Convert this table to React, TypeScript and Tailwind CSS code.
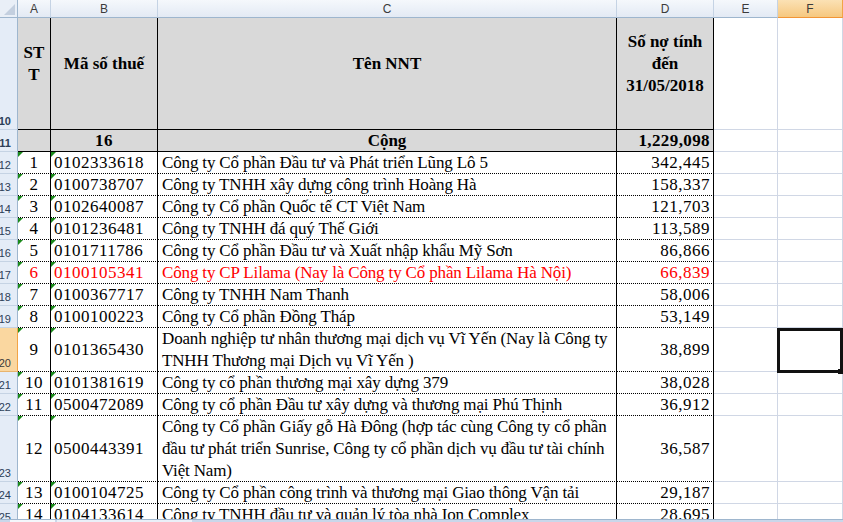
import React from 'react'

type DataRow = {
    num: number
    stt: string
    mst: string
    name: string[]
    amount: string
    red?: boolean
}

const cols = { hdr: 'w-[18px]', a: 'w-[33px]', b: 'w-[107px]', c: 'w-[459px]', d: 'w-[97px]', e: 'w-[64px]', f: 'w-[65px]' }

const rows: DataRow[] = [
    { num: 12, stt: '1', mst: '0102333618', name: ['Công ty Cổ phần Đầu tư và Phát triển Lũng Lô 5'], amount: '342,445' },
    { num: 13, stt: '2', mst: '0100738707', name: ['Công ty TNHH xây dựng công trình Hoàng Hà'], amount: '158,337' },
    { num: 14, stt: '3', mst: '0102640087', name: ['Công ty Cổ phần Quốc tế CT Việt Nam'], amount: '121,703' },
    { num: 15, stt: '4', mst: '0101236481', name: ['Công ty TNHH đá quý Thế Giới'], amount: '113,589' },
    { num: 16, stt: '5', mst: '0101711786', name: ['Công ty Cổ phần Đầu tư và Xuất nhập khẩu Mỹ Sơn'], amount: '86,866' },
    { num: 17, stt: '6', mst: '0100105341', name: ['Công ty CP Lilama (Nay là Công ty Cổ phần Lilama Hà Nội)'], amount: '66,839', red: true },
    { num: 18, stt: '7', mst: '0100367717', name: ['Công ty TNHH Nam Thanh'], amount: '58,006' },
    { num: 19, stt: '8', mst: '0100100223', name: ['Công ty Cổ phần Đồng Tháp'], amount: '53,149' },
    {
        num: 20, stt: '9', mst: '0101365430',
        name: ['Doanh nghiệp tư nhân thương mại dịch vụ Vĩ Yến (Nay là Công ty', 'TNHH Thương mại Dịch vụ Vĩ Yến )'],
        amount: '38,899',
    },
    { num: 21, stt: '10', mst: '0101381619', name: ['Công ty cổ phần thương mại xây dựng 379'], amount: '38,028' },
    { num: 22, stt: '11', mst: '0500472089', name: ['Công ty cổ phần Đầu tư xây dựng và thương mại Phú Thịnh'], amount: '36,912' },
    {
        num: 23, stt: '12', mst: '0500443391',
        name: [
            'Công ty Cổ phần Giấy gỗ Hà Đông (hợp tác cùng Công ty cổ phần',
            'đầu tư phát triển Sunrise, Công ty cổ phần dịch vụ đầu tư tài chính',
            'Việt Nam)',
        ],
        amount: '36,587',
    },
    { num: 24, stt: '13', mst: '0100104725', name: ['Công ty Cổ phần công trình và thương mại Giao thông Vận tải'], amount: '29,187' },
    { num: 25, stt: '14', mst: '0104133614', name: ['Công ty TNHH đầu tư và quản lý tòa nhà Ion Complex'], amount: '28,695' },
]

// tam giác xanh "số lưu dạng text"
function Flag() {
    return <span className="absolute top-0 left-0 w-0 h-0 border-t-[5px] border-t-[#1b8a1b] border-r-[5px] border-r-transparent" />
}

function RowHeader({ label, selected }: { label: number; selected?: boolean }) {
    return (
        <div
            className={`${cols.hdr} shrink-0 flex items-end justify-end pr-[6px] pb-[1px] overflow-hidden border-r border-b font-['Liberation_Sans',sans-serif] text-[11px] leading-[14px] tracking-normal ${
                selected
                    ? 'bg-[#fad7a0] border-r-[#f2a446] border-b-[#e8b46e] text-[#3a3a3a]'
                    : 'bg-[#e4ecf7] border-r-[#9eb6ce] border-b-[#c5d3e4] text-[#2c3e58]'
            }`}
        >
            {label}
        </div>
    )
}

function GridCells() {
    return (
        <>
            <div className={`${cols.e} shrink-0 border-r border-b border-[#d0d7e5]`} />
            <div className={`${cols.f} shrink-0 border-r border-b border-[#d0d7e5]`} />
        </>
    )
}

export default function App() {
    return (
        <div className="w-[843px] h-[522px] flex flex-col bg-white overflow-hidden font-['Liberation_Serif','Times_New_Roman',serif] text-[17px] text-black">
            <div className="relative flex-1 overflow-hidden">
                {/* Tiêu đề cột */}
                <div className="flex h-[18px] font-['Liberation_Sans',sans-serif] text-[12px] text-[#3b3b3b]">
                    <div className={`${cols.hdr} shrink-0 relative bg-[#e9eff7] border-r border-b border-[#9eb6ce]`}>
                        <span className="absolute right-[2px] bottom-[2px] w-0 h-0 border-l-[11px] border-l-transparent border-b-[11px] border-b-[#c3cfdf]" />
                    </div>
                    {[
                        { l: 'A', w: cols.a },
                        { l: 'B', w: cols.b },
                        { l: 'C', w: cols.c },
                        { l: 'D', w: cols.d },
                        { l: 'E', w: cols.e },
                    ].map((h) => (
                        <div
                            key={h.l}
                            className={`${h.w} shrink-0 flex items-center justify-center bg-gradient-to-b from-[#f5f8fc] to-[#e3eaf4] border-r border-r-[#c5d3e4] border-b border-b-[#9eb6ce]`}
                        >
                            {h.l}
                        </div>
                    ))}
                    <div className={`${cols.f} shrink-0 flex items-center justify-center bg-gradient-to-b from-[#fbe1b4] to-[#f6c87f] border-r border-r-[#f2a446] border-b border-b-[#f29536]`}>
                        F
                    </div>
                </div>

                {/* Dòng 10: tiêu đề bảng */}
                <div className="flex h-[112px] font-bold">
                    <RowHeader label={10} />
                    <div className={`${cols.a} shrink-0 bg-[#d9d9d9] border-r border-r-black border-b border-b-black flex flex-col items-center justify-center pb-[20px] leading-[22px]`}>
                        <span>ST</span>
                        <span>T</span>
                    </div>
                    <div className={`${cols.b} shrink-0 bg-[#d9d9d9] border-r border-r-black border-b border-b-black flex items-center justify-center pb-[20px]`}>
                        Mã số thuế
                    </div>
                    <div className={`${cols.c} shrink-0 bg-[#d9d9d9] border-r border-r-black border-b border-b-black flex items-center justify-center pb-[20px]`}>
                        Tên NNT
                    </div>
                    <div className={`${cols.d} shrink-0 bg-[#d9d9d9] border-r border-r-black border-b border-b-black flex flex-col items-center justify-center pb-[20px] leading-[22px]`}>
                        <span>Số nợ tính</span>
                        <span>đến</span>
                        <span>31/05/2018</span>
                    </div>
                    <GridCells />
                </div>

                {/* Dòng 11: Cộng */}
                <div className="flex h-[22px] font-bold leading-[21px]">
                    <RowHeader label={11} />
                    <div className={`${cols.a} shrink-0 bg-[#d9d9d9] border-r border-r-black border-b border-b-black`} />
                    <div className={`${cols.b} shrink-0 bg-[#d9d9d9] border-r border-r-black border-b border-b-black text-center tracking-[0.5px]`}>16</div>
                    <div className={`${cols.c} shrink-0 bg-[#d9d9d9] border-r border-r-black border-b border-b-black text-center`}>Cộng</div>
                    <div className={`${cols.d} shrink-0 bg-[#d9d9d9] border-r border-r-black border-b border-b-black text-right pr-[3px] tracking-[0.4px]`}>1,229,098</div>
                    <GridCells />
                </div>

                {/* Dữ liệu */}
                {rows.map((r) => {
                    const h = r.name.length * 22
                    return (
                        <div key={r.num} className={`flex leading-[22px] ${r.red ? 'text-[#ff0000]' : ''}`} style={{ height: h }}>
                            <RowHeader label={r.num} selected={r.num === 20} />
                            <div className={`${cols.a} shrink-0 relative flex items-center justify-center tracking-[0.5px] border-r border-r-black border-b border-b-black [border-bottom-style:dotted]`}>
                                <Flag />
                                {r.stt}
                            </div>
                            <div className={`${cols.b} shrink-0 relative flex items-center pl-[3px] tracking-[0.5px] border-r border-r-black border-b border-b-black [border-bottom-style:dotted]`}>
                                <Flag />
                                {r.mst}
                            </div>
                            <div className={`${cols.c} shrink-0 flex flex-col pl-[4px] whitespace-nowrap tracking-[-0.15px] border-r border-r-black border-b border-b-black [border-bottom-style:dotted]`}>
                                {r.name.map((line) => (
                                    <span key={line}>{line}</span>
                                ))}
                            </div>
                            <div className={`${cols.d} shrink-0 flex items-center justify-end pr-[3px] tracking-[0.5px] border-r border-r-black border-b border-b-black [border-bottom-style:dotted]`}>
                                {r.amount}
                            </div>
                            <GridCells />
                        </div>
                    )
                })}

                {/* Ô đang chọn F20 */}
                <div className="absolute left-[777px] top-[328px] w-[66px] h-[45px] border-[3px] border-[#111]">
                    <span className="absolute -right-[3px] -bottom-[4px] w-[5px] h-[5px] bg-[#111]" />
                </div>
            </div>

            {/* Thanh cuộn ngang */}
            <div className="h-[3px] flex bg-[#c9d7ea] border-t border-[#9eb6ce]">
                <div className="w-[10px]" />
                <div className="w-[45px] bg-[#f4f7fb]" />
                <div className="w-[2px]" />
                <div className="w-[135px] bg-[#eaf0f8]" />
            </div>
        </div>
    )
}
